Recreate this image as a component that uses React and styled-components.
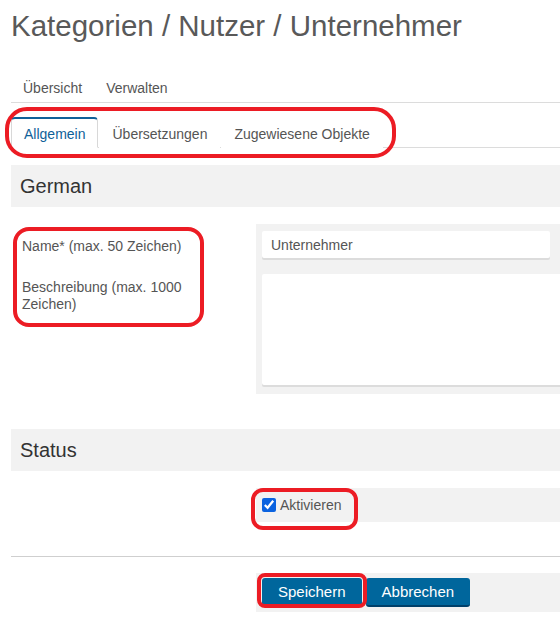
import React from "react";
import styled, { createGlobalStyle } from "styled-components";

const GlobalStyle = createGlobalStyle`
  html, body {
    margin: 0;
    padding: 0;
    background: #fff;
    overflow: hidden;
  }
  body {
    font-family: "Liberation Sans", Arial, sans-serif;
    font-size: 14px;
    color: #555;
  }
  * { box-sizing: border-box; }
`;

const Page = styled.div`
  position: relative;
  width: 560px;
  height: 623px;
  padding: 9px 0 0 11px;
`;

const Title = styled.h1`
  margin: 0;
  font-size: 29.5px;
  line-height: 33px;
  font-weight: 400;
  color: #595959;
`;

const Nav = styled.ul`
  display: flex;
  list-style: none;
  margin: 32px 0 0 0;
  padding: 0;
  border-bottom: 1px solid #dcdcdc;
`;

const NavItem = styled.li`
  padding: 0 12px;
  height: 28px;
  line-height: 29px;
  color: #555;
`;

const TabBar = styled.ul`
  display: flex;
  list-style: none;
  margin: 14px 0 0 0;
  padding: 0;
  border-bottom: 1px solid #dcdcdc;
`;

const Tab = styled.li`
  height: 31px;
  line-height: 30px;
  padding: 0 12px;
  margin-right: 1px;
  margin-bottom: -1px;
  color: ${({ $active }) => ($active ? "#0f6199" : "#555")};
  background: #fff;
  border: 1px solid ${({ $active }) => ($active ? "#d8d8d8" : "transparent")};
  border-top: 2px solid ${({ $active }) => ($active ? "#0f6199" : "transparent")};
  border-bottom-color: #fff;
  border-radius: 4px 4px 0 0;
`;

const SectionHeader = styled.div`
  margin-top: ${({ $top }) => $top}px;
  height: 42px;
  line-height: 42px;
  padding-left: 9px;
  background: #f2f2f2;
  font-size: 20px;
  color: #333;
`;

const FormGrid = styled.div`
  display: grid;
  grid-template-columns: 245px 1fr;
  margin-top: ${({ $top }) => $top}px;
`;

const Labels = styled.div`
  display: flex;
  flex-direction: column;
  padding: 0 60px 0 11px;
`;

const Label = styled.label`
  display: block;
  line-height: 17px;
  padding-top: ${({ $pad }) => $pad}px;
  height: ${({ $h }) => $h}px;
  color: #555;
`;

const Panel = styled.div`
  background: #f2f2f2;
  padding: ${({ $pad }) => $pad || "7px 0 7px 6px"};
  display: flex;
  flex-direction: column;
  gap: 14px;
`;

const TextInput = styled.div`
  height: 27px;
  line-height: 29px;
  width: 288px;
  padding-left: 9px;
  background: #fff;
  border-radius: 2px;
  box-shadow: 0 2px 0 #dcdcdc;
  margin-bottom: 2px;
  color: #555;
`;

const TextArea = styled.div`
  height: 111px;
  background: #fff;
  border-radius: 2px 0 0 2px;
  box-shadow: 0 2px 0 #dcdcdc;
  margin-bottom: 2px;
`;

const CheckLabel = styled.label`
  display: flex;
  align-items: center;
  height: 34px;
  gap: 4px;
  color: #555;
`;

const Check = styled.input`
  width: 14px;
  height: 14px;
  margin: 0;
  accent-color: #0b63e0;
`;

const Divider = styled.hr`
  margin: 34px 0 0 0;
  border: none;
  border-top: 1px solid #cfcfcf;
`;

const ButtonRow = styled.div`
  display: flex;
  gap: 4px;
`;

const Button = styled.button`
  height: 29px;
  padding: 0 16px;
  border: none;
  border-bottom: 2px solid #00406a;
  border-radius: 3px;
  background: #00669c;
  color: #fff;
  font-family: "Liberation Sans", Arial, sans-serif;
  font-size: 15px;
  line-height: 27px;
`;

const Mark = styled.div`
  position: absolute;
  left: ${({ $x }) => $x}px;
  top: ${({ $y }) => $y}px;
  width: ${({ $w }) => $w}px;
  height: ${({ $h }) => $h}px;
  border: 4px solid #ec1c24;
  border-radius: ${({ $r }) => $r}px;
  pointer-events: none;
`;

export default function App() {
  return (
    <>
      <GlobalStyle />
      <Page>
        <Title>Kategorien / Nutzer / Unternehmer</Title>
        <Nav>
          <NavItem>Übersicht</NavItem>
          <NavItem>Verwalten</NavItem>
        </Nav>
        <TabBar>
          <Tab $active>Allgemein</Tab>
          <Tab>Übersetzungen</Tab>
          <Tab>Zugewiesene Objekte</Tab>
        </TabBar>

        <SectionHeader $top={17}>German</SectionHeader>
        <FormGrid $top={17}>
          <Labels>
            <Label $pad={14} $h={48}>Name* (max. 50 Zeichen)</Label>
            <Label $pad={7}>Beschreibung (max. 1000 Zeichen)</Label>
          </Labels>
          <Panel>
            <TextInput>Unternehmer</TextInput>
            <TextArea />
          </Panel>
        </FormGrid>

        <SectionHeader $top={35}>Status</SectionHeader>
        <FormGrid $top={17}>
          <div />
          <Panel $pad="0 0 0 6px">
            <CheckLabel>
              <Check type="checkbox" defaultChecked />
              Aktivieren
            </CheckLabel>
          </Panel>
        </FormGrid>

        <Divider />
        <FormGrid $top={16}>
          <div />
          <Panel $pad="5px 0 5px 6px">
            <ButtonRow>
              <Button>Speichern</Button>
              <Button>Abbrechen</Button>
            </ButtonRow>
          </Panel>
        </FormGrid>

        <Mark $x={5} $y={107} $w={391} $h={51} $r={22} />
        <Mark $x={13} $y={227} $w={191} $h={100} $r={16} />
        <Mark $x={251} $y={488} $w={107} $h={42} $r={12} />
        <Mark $x={257} $y={573} $w={110} $h={35} $r={8} />
      </Page>
    </>
  );
}
